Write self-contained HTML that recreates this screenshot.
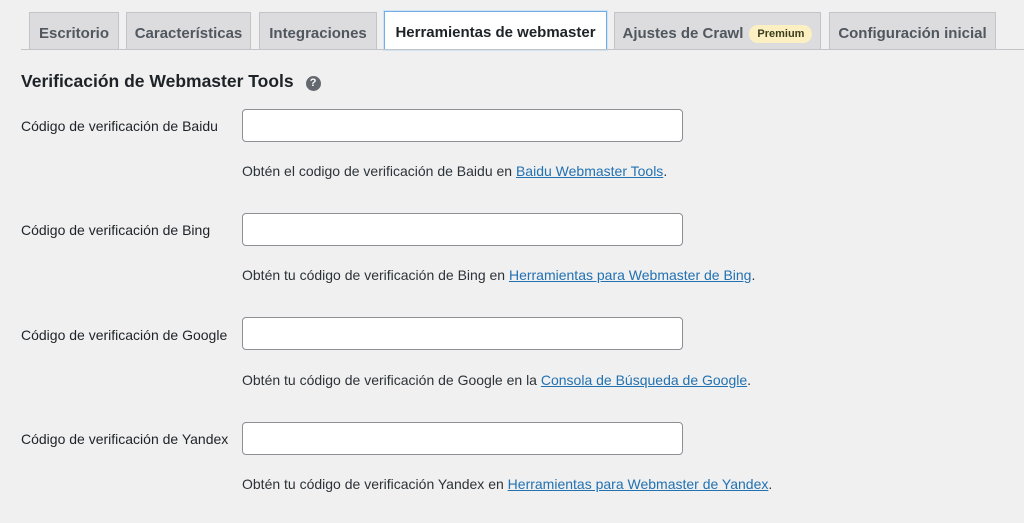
<!DOCTYPE html>
<html><head><meta charset="utf-8"><style>
body{margin:0;width:1024px;height:523px;background:#f0f0f1;font-family:"Liberation Sans",sans-serif;color:#1d2327;position:relative;overflow:hidden}
.tab{position:absolute;top:12px;height:37px;background:#dcdcde;border:1px solid #c3c4c7;border-bottom:none;box-sizing:border-box;font-size:15px;color:#50575e;line-height:41px;text-align:center;font-weight:bold}
.tab.act{background:#fff;color:#1d2327;border:1px solid #72aee6;height:39px;box-shadow:0 0 0 1px #cfe3f5}
.line{position:absolute;left:21px;right:0;top:49px;border-top:1px solid #c3c4c7}
.badge{display:inline-block;background:#fcf0c3;color:#3c3c1c;font-size:11px;line-height:18px;padding:0 8px;border-radius:9px;vertical-align:1px;margin-left:6px}
h2{position:absolute;left:21px;top:71px;margin:0;font-size:17.5px;font-weight:bold;color:#1d2327}
.q{display:inline-block;width:15px;height:15px;border-radius:50%;background:#646970;color:#fff;font-size:11px;line-height:15px;text-align:center;margin-left:12px;vertical-align:1px}
.lab{position:absolute;left:21px;font-size:14px;color:#1d2327}
.inp{position:absolute;left:242px;width:441px;height:33px;background:#fff;border:1px solid #8c8f94;border-radius:4px;box-sizing:border-box}
.desc{position:absolute;left:242px;font-size:14px;color:#2c3338}
a{color:#2271b1;text-decoration:underline}
</style></head><body>
<div class="tab" style="left:29px;width:90px">Escritorio</div>
<div class="tab" style="left:126px;width:125px">Características</div>
<div class="tab" style="left:259px;width:118px">Integraciones</div>
<div class="tab act" style="left:384px;width:223px;top:11px">Herramientas de webmaster</div>
<div class="tab" style="left:614px;width:207px">Ajustes de Crawl<span class="badge">Premium</span></div>
<div class="tab" style="left:829px;width:167px">Configuración inicial</div>
<div class="line"></div>
<h2>Verificación de Webmaster Tools<span class="q">?</span></h2>

<div class="lab" style="top:118px">Código de verificación de Baidu</div>
<div class="inp" style="top:109px"></div>
<div class="desc" style="top:163px">Obtén el codigo de verificación de Baidu en <a>Baidu Webmaster Tools</a>.</div>

<div class="lab" style="top:222px">Código de verificación de Bing</div>
<div class="inp" style="top:213px"></div>
<div class="desc" style="top:267px">Obtén tu código de verificación de Bing en <a>Herramientas para Webmaster de Bing</a>.</div>

<div class="lab" style="top:327px">Código de verificación de Google</div>
<div class="inp" style="top:317px"></div>
<div class="desc" style="top:372px">Obtén tu código de verificación de Google en la <a>Consola de Búsqueda de Google</a>.</div>

<div class="lab" style="top:431px">Código de verificación de Yandex</div>
<div class="inp" style="top:422px"></div>
<div class="desc" style="top:476px">Obtén tu código de verificación Yandex en <a>Herramientas para Webmaster de Yandex</a>.</div>
</body></html>
